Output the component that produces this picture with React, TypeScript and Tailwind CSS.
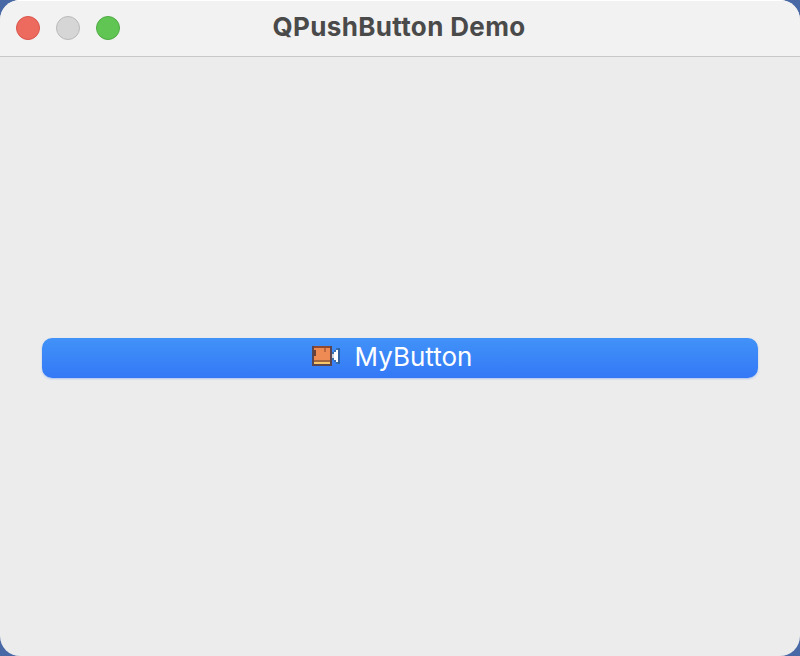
import { clsx } from 'clsx'

const lights = [
  { name: 'Close', style: 'bg-[#ed6a5e] border-[#d9544a]' },
  { name: 'Minimize', style: 'bg-[#d6d6d6] border-[#b9b9b9]' },
  { name: 'Zoom', style: 'bg-[#61c554] border-[#4eab42]' },
]

function CameraIcon() {
  return (
    <svg className="w-7 h-5 shrink-0" viewBox="0 0 14 10" shapeRendering="crispEdges" aria-hidden="true">
      {/* Body */}
      <path fill="#5b4650" d="M0 0h10v10H0z" />
      <path fill="#91492f" d="M1 0h8v1H1z" />
      <path fill="#ee8b55" d="M1 1h8v6H1z" />
      <path fill="#6b4038" d="M1 2h1v3H1z" />
      <path fill="#bd6840" d="M6 1h1v2H6z" />
      <path fill="#a3663d" d="M1 7h8v1H1z" />
      <path fill="#f5c766" d="M1 8h8v1H1z" />
      {/* Lens */}
      <path fill="#2f629f" d="M13 1h1v8h-1z" />
      <path fill="#3a6fae" d="M12 1h1v1h-1zM11 2h1v1h-1zM10 3h1v1h-1zM10 6h1v1h-1zM11 7h1v1h-1zM12 8h1v1h-1z" />
      <path fill="#ffffff" d="M12 2h1v6h-1V7h-1V6h-1V4h1V3h1z" />
      <path fill="#cfd6df" d="M10 4h1v2h-1z" />
    </svg>
  )
}

export default function App() {
  return (
    <div className="h-screen bg-[#4868a6] overflow-hidden">
      <div className="flex flex-col h-full rounded-[20px] overflow-hidden bg-[#ececec]">
        {/* Title bar */}
        <header className="grid grid-cols-[1fr_auto_1fr] items-center h-[57px] px-4 pb-0.5 bg-[#f2f2f2] border-t border-t-white border-b border-b-[#c8c8c8]">
          <div className="flex gap-4">
            {lights.map((light) => (
              <button
                key={light.name}
                aria-label={light.name}
                className={clsx('size-6 rounded-full border', light.style)}
              />
            ))}
          </div>
          <h1 className="font-['Inter',sans-serif] text-[26px] leading-8 font-bold tracking-[0.35px] text-[#4a4a4a] -mt-0.5 mr-0.5">
            QPushButton Demo
          </h1>
        </header>

        <main className="flex-1 px-[42px] pt-[281px]">
          <button className="flex items-center justify-center w-full h-10 gap-[15px] pr-4 pb-1 rounded-[10px] bg-linear-to-b from-[#4192f8] to-[#3478f6] shadow-[0_1px_2px_rgba(52,120,246,0.35)]">
            <CameraIcon />
            <span className="font-['Inter',sans-serif] text-[26px] leading-8 text-white pt-0.5">MyButton</span>
          </button>
        </main>
      </div>
    </div>
  )
}
